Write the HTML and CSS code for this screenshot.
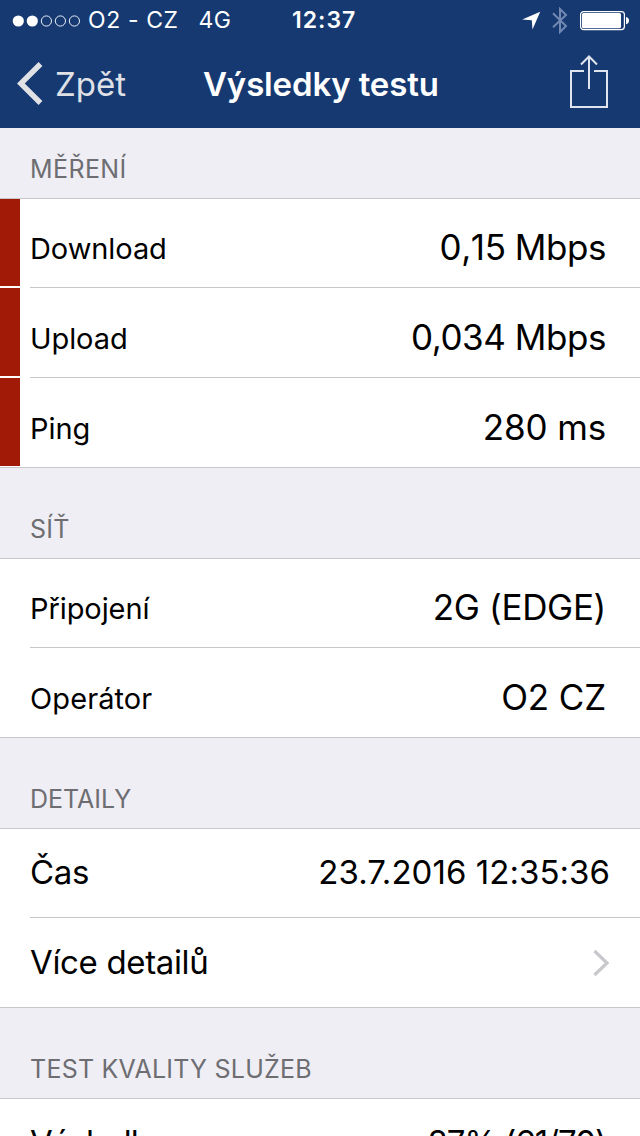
FILE: index.html
```html
<!DOCTYPE html>
<html lang="cs">
<head>
<meta charset="utf-8">
<title>Výsledky testu</title>
<link rel="stylesheet" href="styles.css">
</head>
<body>
<div class="screen">
  <header class="top">
    <div class="status">
      <div class="carrier">
        <svg class="signal" width="70" height="12" viewBox="0 0 70 12">
          <circle cx="6.3" cy="6" r="5.6" fill="#fff"/><circle cx="20.3" cy="6" r="5.6" fill="#fff"/>
          <g fill="none" stroke="#e8edf6" stroke-width="1"><circle cx="34.4" cy="6" r="5.1"/><circle cx="48.4" cy="6" r="5.1"/><circle cx="62.4" cy="6" r="5.1"/></g>
        </svg>
        <span class="operator">O2 - CZ</span>
        <span class="network">4G</span>
      </div>
      <span class="clock">12:37</span>
      <div class="indicators">
        <svg class="location" width="19" height="19" viewBox="0 0 19 19"><path d="M18.2 .8 10.500 18.500 9.8 9.2 .2 8.4Z" fill="#fff"/></svg>
        <svg class="bluetooth" width="16" height="27" viewBox="0 0 16 27"><path d="M1 6.3 14 19 8 25V2L14 8 1 20.3" fill="none" stroke="#7188b2" stroke-width="2"/></svg>
        <svg class="battery" width="50" height="20" viewBox="0 0 50 20"><rect x=".6" y=".6" width="43.8" height="18" rx="3" fill="none" stroke="#fff" stroke-width="1.2"/><rect x="2" y="2" width="39" height="15.3" rx="1.5" fill="#fff"/><path d="M46 6c4 .5 4 6.700 0 7.200Z" fill="#fff"/></svg>
      </div>
    </div>
    <nav class="nav">
      <div class="back">
        <svg width="26" height="43" viewBox="0 0 26 43"><path d="M23.500 2 3.800 21.500 23.500 41" fill="none" stroke="#dfe1e5" stroke-width="5.500"/></svg>
        <span class="back-text">Zpět</span>
      </div>
      <h1 class="title">Výsledky testu</h1>
      <svg class="share" width="40" height="54" viewBox="0 0 40 54" fill="none" stroke="#e0e4ef" stroke-width="2"><path d="M14 16H1V52H37V16H24M19 34V2M11 9.500 19 1.500 27 9.500"/></svg>
    </nav>
  </header>
  <main>
    <h2 class="caption first"><span>MĚŘENÍ</span></h2>
    <section class="group">
      <div class="row bad"><span class="label">Download</span><span class="value download-value">0,15 Mbps</span></div>
      <div class="row bad"><span class="label">Upload</span><span class="value upload-value">0,034 Mbps</span></div>
      <div class="row bad"><span class="label">Ping</span><span class="value">280 ms</span></div>
    </section>
    <h2 class="caption"><span>SÍŤ</span></h2>
    <section class="group">
      <div class="row"><span class="label">Připojení</span><span class="value connection-value">2G (EDGE)</span></div>
      <div class="row"><span class="label operator-label">Operátor</span><span class="value">O2 CZ</span></div>
    </section>
    <h2 class="caption details"><span>DETAILY</span></h2>
    <section class="group large">
      <div class="row"><span class="label">Čas</span><span class="value">23.7.2016 12:35:36</span></div>
      <div class="row"><span class="label">Více detailů</span><svg class="chevron" width="17" height="28" viewBox="0 0 17 28"><path d="M1.500 2 14 14 1.500 26" fill="none" stroke="#c7c7cc" stroke-width="3.200"/></svg></div>
    </section>
    <h2 class="caption"><span>TEST KVALITY SLUŽEB</span></h2>
    <section class="group last">
      <div class="row"><span class="label">Výsledky</span><span class="value">87% (61/70)</span></div>
    </section>
  </main>
</div>
</body>
</html>
```
FILE: styles.css
```css
* { box-sizing: border-box; }
body { margin: 0; font-family: Inter, "Liberation Sans", sans-serif; color: #000; }
h1, h2 { margin: 0; font-weight: 400; }
svg { display: block; flex: none; }
span, h1 { white-space: nowrap; }
.screen { width: 640px; height: 1136px; overflow: hidden; background: #efeef4; }
.top { height: 128px; background: #163972; color: #fff; }
.status { display: grid; grid-template-columns: 290px 60px 1fr; height: 40px; align-items: start; font-size: 23px; line-height: 41px; }
.carrier { display: flex; padding-left: 12px; }
.signal { margin-top: 15px; }
.operator { margin-left: 6px; letter-spacing: .6px; }
.network { margin-left: 20px; letter-spacing: .2px; }
.clock { font-weight: 600; padding-left: 2px; letter-spacing: 1px; }
.indicators { display: flex; padding-left: 172px; }
.location { margin-top: 11px; }
.bluetooth { margin: 7px 0 0 11px; }
.battery { margin: 11px 0 0 12px; }
.nav { display: grid; grid-template-columns: 203px 1fr 70px; height: 88px; }
.back { display: flex; padding-left: 17px; color: #dfe1e7; }
.back svg { margin-top: 22px; }
.back-text { margin-left: 12px; font-size: 33px; line-height: 88px; }
.title { font-size: 33px; font-weight: 600; line-height: 88px; letter-spacing: -.15px; }
.share { margin-top: 15px; }
.caption { display: flex; height: 90px; padding: 41px 0 0 30px; font-size: 25px; line-height: 40px; letter-spacing: .24px; color: #6d6d72; }
.caption.first { height: 70px; padding-top: 21px; letter-spacing: .4px; }
.caption.details { letter-spacing: 0; }
.group { border-top: 1px solid #c8c7cc; border-bottom: 1px solid #c8c7cc; background: #fff; }
.row { display: flex; height: 90px; justify-content: space-between; align-items: flex-end; padding: 0 34px 0 30px; background: linear-gradient(#c8c7cc, #c8c7cc) 30px 100% / 610px 1px no-repeat; }
.row:first-child { height: 89px; }
.row:last-child { height: 89px; background: none; }
.row.bad { background: linear-gradient(#a11a08, #a11a08) 0 0 / 20px calc(100% - 2px) no-repeat, linear-gradient(#c8c7cc, #c8c7cc) 30px 100% / 610px 1px no-repeat; }
.row.bad:last-child { background: linear-gradient(#a11a08, #a11a08) 0 0 / 20px calc(100% - 1px) no-repeat; }
.label, .value { line-height: 60px; }
.label { font-size: 29px; margin-bottom: 9px; letter-spacing: -.08px; }
.operator-label { letter-spacing: .1px; }
.value { font-size: 35px; margin-bottom: 11px; letter-spacing: -.15px; }
.download-value { letter-spacing: -.45px; font-kerning: none; }
.upload-value { letter-spacing: -.45px; }
.connection-value { letter-spacing: -.35px; }
.row:last-child .label { margin-bottom: 8px; }
.row:last-child .value { margin-bottom: 10px; }
.large .row { padding-right: 30px; }
.large .label, .large .value { font-size: 33px; }
.large .label { letter-spacing: -.35px; }
.large .value { letter-spacing: .05px; }
.large .row:first-child > span { margin-bottom: 16px; }
.large .row:last-child > span { margin-bottom: 15px; }
.chevron { margin-bottom: 30px; }
.last .row { padding-top: 13px; align-items: flex-start; }
.last .label, .last .value { font-size: 33px; }
.last .label { letter-spacing: -.9px; }
.last .value { letter-spacing: -1px; }
```
